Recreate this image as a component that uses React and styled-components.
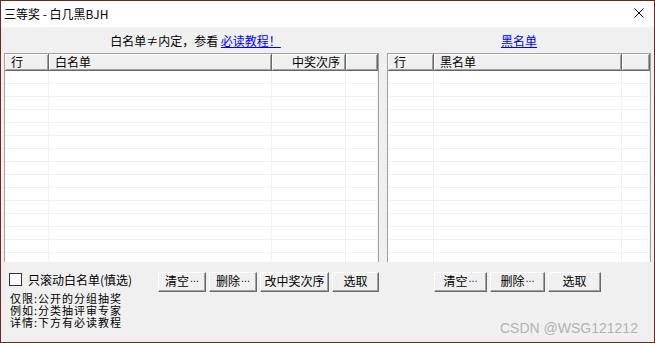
import styled, { createGlobalStyle } from "styled-components";

const GlobalStyle = createGlobalStyle`
  html, body {
    margin: 0;
    padding: 0;
    background: #f0f0f0;
  }
  body {
    font-family: "Noto Sans CJK SC", "Microsoft YaHei", sans-serif;
    font-size: 12px;
    color: #000;
  }
  * {
    box-sizing: border-box;
  }
`;

const Window = styled.div`
  position: relative;
  width: 655px;
  height: 343px;
  border: 1px solid #6b2626;
  background: #f0f0f0;
  display: flex;
  flex-direction: column;
  overflow: hidden;
`;

const TitleBar = styled.header`
  height: 26px;
  flex: none;
  background: #fff;
  display: flex;
  align-items: flex-start;
  padding: 7px 10px 0 3px;
`;

const Title = styled.div`
  line-height: 12px;
  white-space: nowrap;
`;

const CloseButton = styled.div`
  margin-left: auto;
  width: 10px;
  height: 10px;
  display: flex;
`;

const Body = styled.main`
  flex: 1;
  display: flex;
  gap: 8px;
  padding: 8px 3px 0 3px;
`;

const Pane = styled.section`
  width: ${({ $width }) => $width}px;
  flex: none;
  display: flex;
  flex-direction: column;
`;

const Caption = styled.div`
  height: 12px;
  line-height: 12px;
  margin-bottom: 6px;
  text-align: center;
  white-space: nowrap;
  padding-left: ${({ $shift }) => $shift || 0}px;
`;

const Link = styled.a`
  color: #0000ff;
  text-decoration: underline;
  cursor: pointer;
`;

const ListBox = styled.div`
  height: 209px;
  background: #fff;
  border: 1px solid #a0a0a0;
  border-bottom: none;
  overflow: hidden;
`;

const Row = styled.div`
  display: grid;
  grid-template-columns: ${({ $cols }) => $cols};
`;

const HeaderCell = styled.div`
  height: 17px;
  padding: 2px ${({ $right }) => ($right ? "5px" : "0")} 0
    ${({ $right }) => ($right ? "0" : "6px")};
  line-height: 12px;
  text-align: ${({ $right }) => ($right ? "right" : "left")};
  white-space: nowrap;
  background: #f0f0f0;
  border-right: 1px solid #696969;
  border-bottom: 1px solid #696969;
  box-shadow: inset 1px 1px #fff, inset -1px -1px #a0a0a0;
`;

const Cell = styled.div`
  height: 13px;
  border-right: 1px solid #f0f0f0;
  border-bottom: 1px solid #f0f0f0;
`;

const Footer = styled.div`
  margin-top: 10px;
  display: flex;
  justify-content: ${({ $center }) => ($center ? "center" : "space-between")};
  padding-right: ${({ $center }) => ($center ? "3px" : "0")};
`;

const Options = styled.div`
  padding: 1px 0 0 5px;
`;

const CheckRow = styled.label`
  display: flex;
  align-items: center;
  gap: 6px;
  height: 13px;
  line-height: 12px;
  white-space: nowrap;
`;

const CheckBox = styled.span`
  width: 13px;
  height: 13px;
  flex: none;
  background: #fff;
  border: 1px solid #333;
`;

const Notes = styled.div`
  margin-top: 6px;
  padding-left: 1px;
  display: flex;
  flex-direction: column;
`;

const NoteLine = styled.div`
  height: 12px;
  font-size: 11px;
  letter-spacing: 1px;
  line-height: 12px;
  white-space: nowrap;
`;

const ButtonRow = styled.div`
  display: flex;
  gap: 3px;
  align-self: flex-start;
`;

const Button = styled.button`
  width: ${({ $width }) => $width}px;
  height: 20px;
  padding: 0 0 2px 0;
  margin: 0;
  display: flex;
  align-items: center;
  justify-content: center;
  font: inherit;
  font-size: 12px;
  line-height: 12px;
  color: #000;
  white-space: nowrap;
  background: #f0f0f0;
  border: 1px solid;
  border-color: #fff #696969 #696969 #fff;
  box-shadow: inset -1px -1px #a0a0a0;
`;

const Dots = styled.span`
  font-family: "DejaVu Sans", sans-serif;
  font-size: 9px;
  margin-left: 1px;
`;

const Watermark = styled.div`
  position: absolute;
  left: 499px;
  top: 320px;
  font-family: "Liberation Sans", Arial, sans-serif;
  font-size: 14px;
  line-height: 14px;
  color: #b3b3b3;
  white-space: nowrap;
`;

const ROW_COUNT = 15;

const ListView = ({ cols, headers }) => (
  <ListBox>
    <Row $cols={cols}>
      {headers.map((h, i) => (
        <HeaderCell key={i} $right={h.right}>
          {h.label}
        </HeaderCell>
      ))}
    </Row>
    {Array.from({ length: ROW_COUNT }).map((_, r) => (
      <Row key={r} $cols={cols}>
        {headers.map((_, i) => (
          <Cell key={i} />
        ))}
      </Row>
    ))}
  </ListBox>
);

const Btn = ({ width, label, more }) => (
  <Button $width={width}>
    {label}
    {more && <Dots>⋯</Dots>}
  </Button>
);

const whiteHeaders = [
  { label: "行" },
  { label: "白名单" },
  { label: "中奖次序", right: true },
  { label: "" },
];

const blackHeaders = [{ label: "行" }, { label: "黑名单" }, { label: "" }];

const notes = ["仅限:公开的分组抽奖", "例如:分类抽评审专家", "详情:下方有必读教程"];

const App = () => (
  <>
    <GlobalStyle />
    <Window>
      <TitleBar>
        <Title>三等奖 - 白几黑BJH</Title>
        <CloseButton>
          <svg width="10" height="10" viewBox="0 0 10 10">
            <path
              d="M0.5 0.5 L9.5 9.5 M9.5 0.5 L0.5 9.5"
              stroke="#000"
              strokeWidth="1"
              fill="none"
            />
          </svg>
        </CloseButton>
      </TitleBar>
      <Body>
        <Pane $width={375}>
          <Caption $shift={8}>
            白名单≠内定，参看 <Link>必读教程！</Link>
          </Caption>
          <ListView cols="44px 223px 74px 1fr" headers={whiteHeaders} />
          <Footer>
            <Options>
              <CheckRow>
                <CheckBox />
                只滚动白名单(慎选)
              </CheckRow>
              <Notes>
                {notes.map((n) => (
                  <NoteLine key={n}>{n}</NoteLine>
                ))}
              </Notes>
            </Options>
            <ButtonRow>
              <Btn width={48} label="清空" more />
              <Btn width={48} label="删除" more />
              <Btn width={69} label="改中奖次序" />
              <Btn width={47} label="选取" />
            </ButtonRow>
          </Footer>
        </Pane>
        <Pane $width={264}>
          <Caption>
            <Link>黑名单</Link>
          </Caption>
          <ListView cols="46px 188px 1fr" headers={blackHeaders} />
          <Footer $center>
            <ButtonRow>
              <Btn width={53} label="清空" more />
              <Btn width={55} label="删除" more />
              <Btn width={53} label="选取" />
            </ButtonRow>
          </Footer>
        </Pane>
      </Body>
      <Watermark>CSDN @WSG121212</Watermark>
    </Window>
  </>
);

export default App;
